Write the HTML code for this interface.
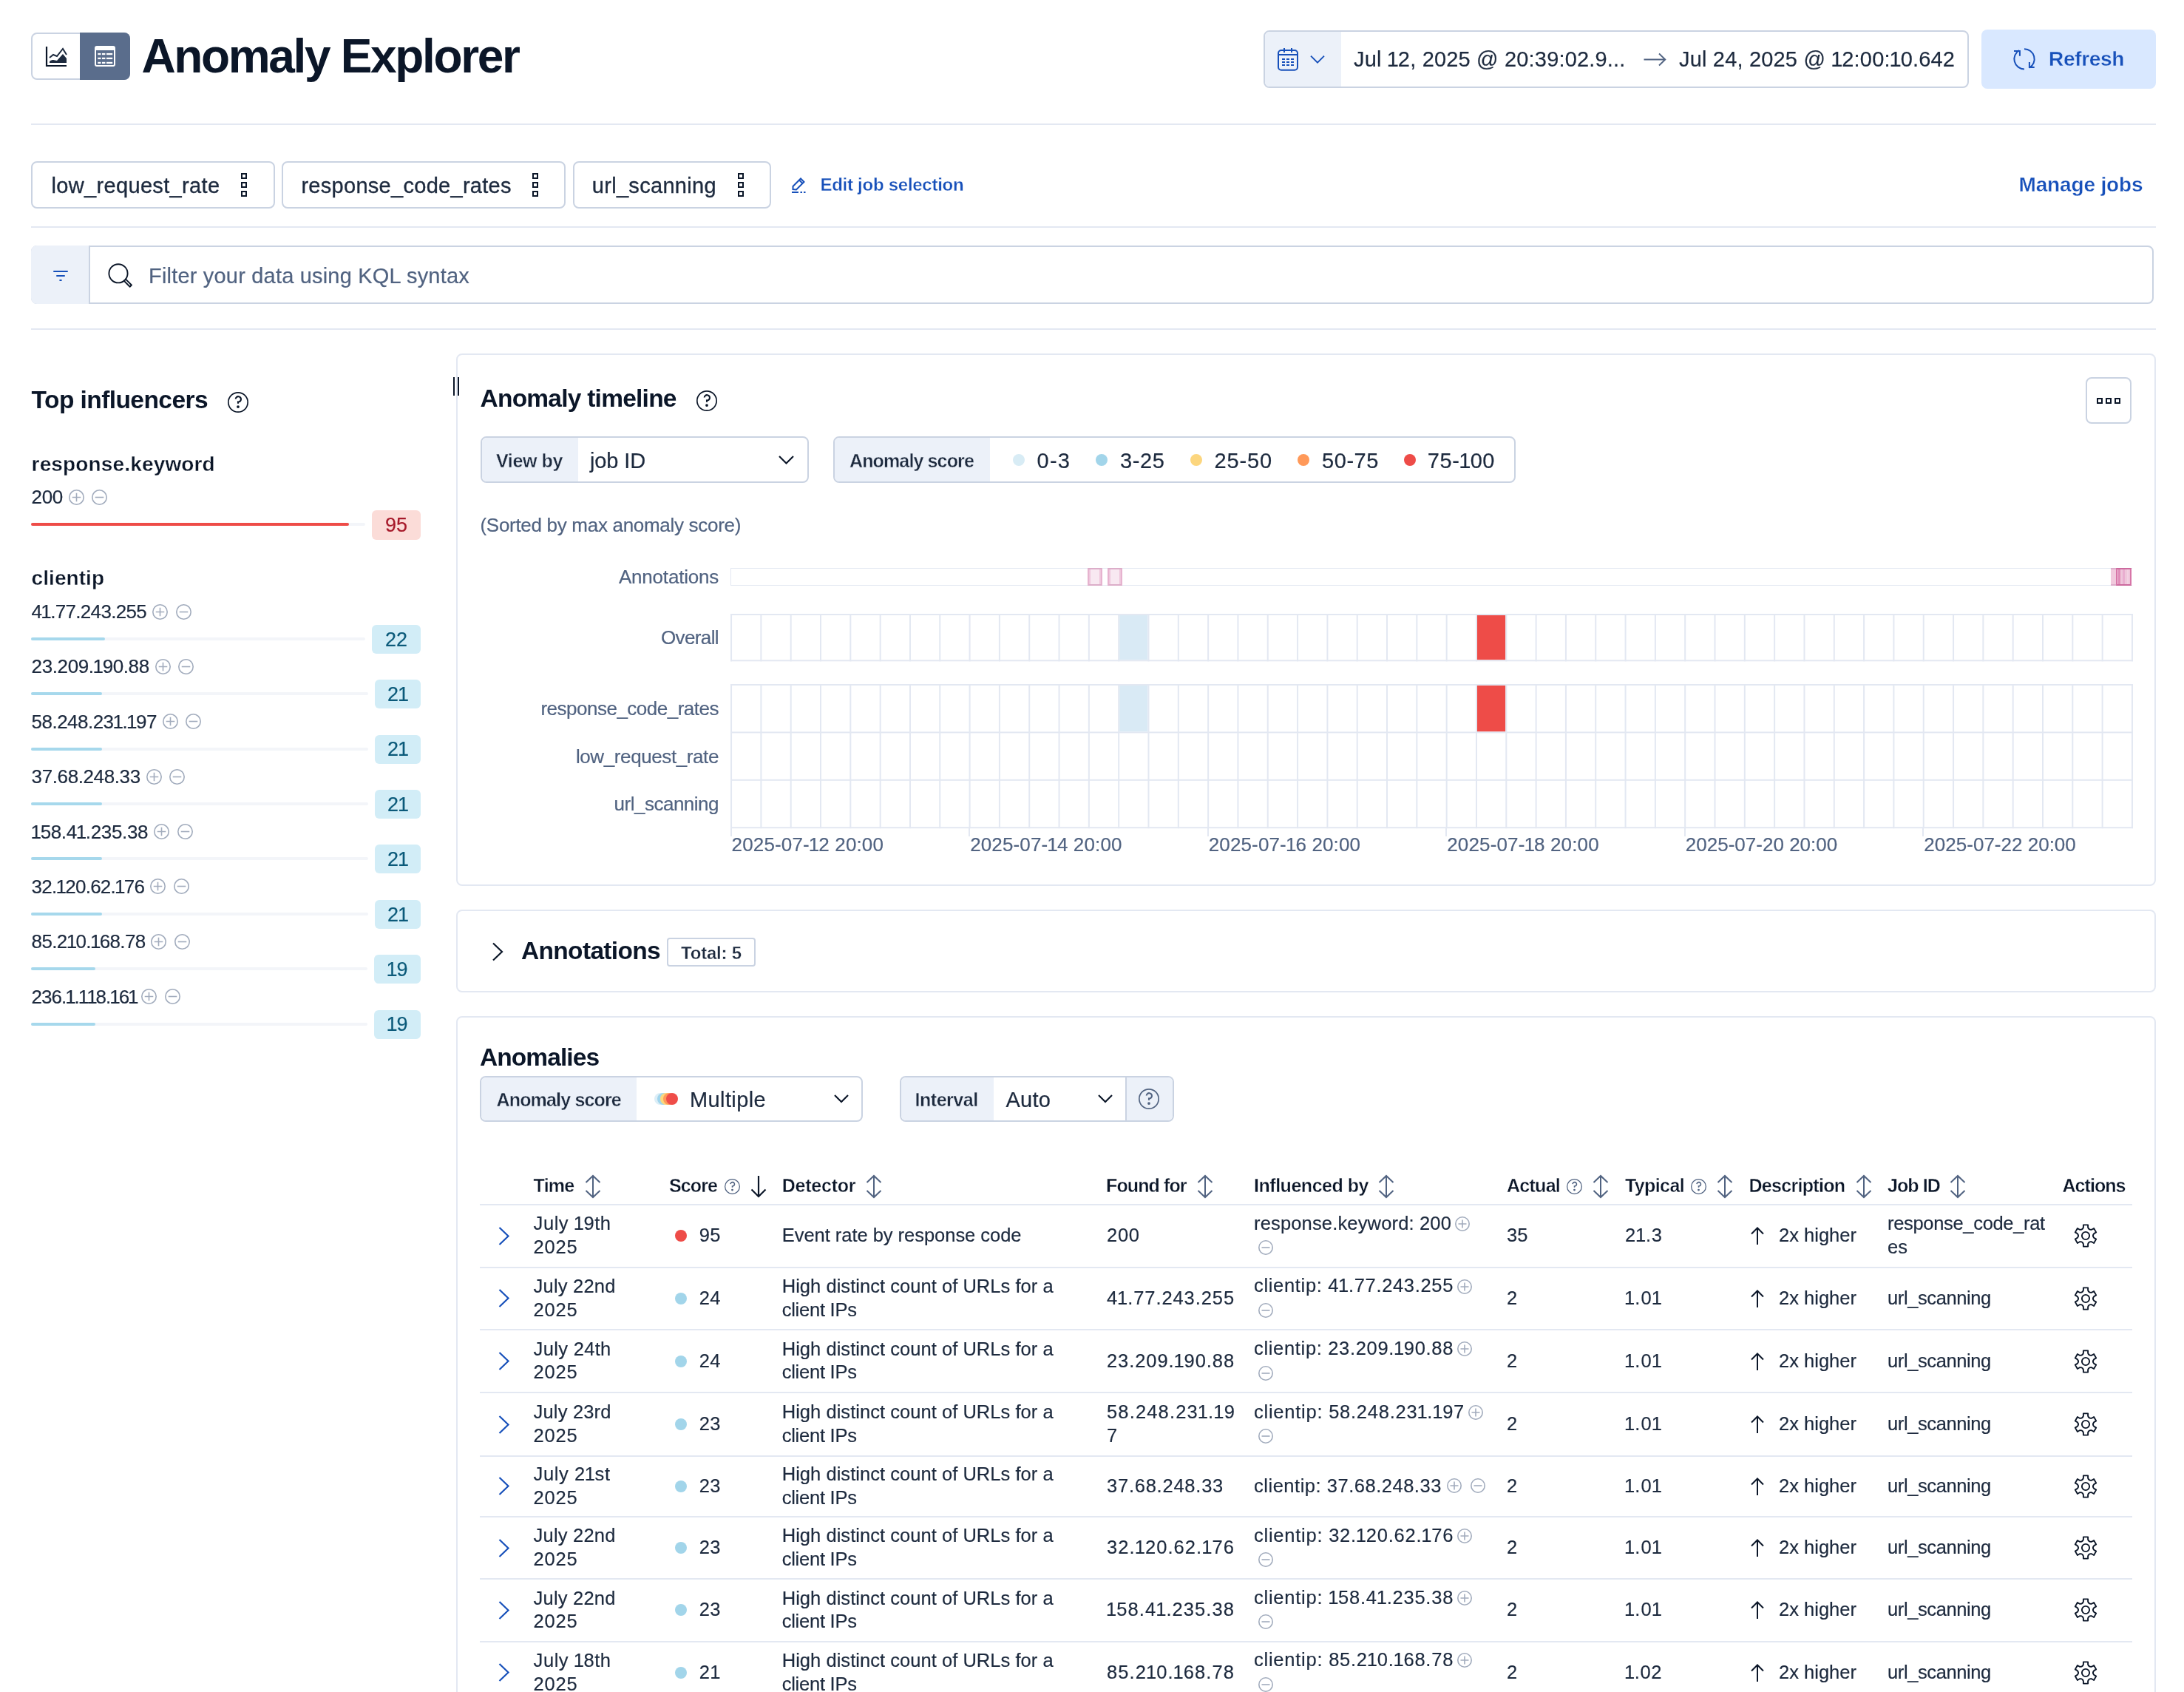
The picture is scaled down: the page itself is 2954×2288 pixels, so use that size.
<!DOCTYPE html><html><head><meta charset="utf-8"><style>
html,body{margin:0;padding:0;background:#fff;}
body{width:2954px;height:2288px;overflow:hidden;position:relative;will-change:transform;font-family:"Liberation Sans",sans-serif;}
.a{position:absolute;box-sizing:border-box;}
.t{position:absolute;line-height:1;white-space:nowrap;}
svg.a{overflow:visible;}
</style></head><body>
<div class="a" style="left:42px;top:44px;width:134px;height:64px;border:2px solid #cad3e2;border-radius:8px;background:#fff;"></div>
<div class="a" style="left:108px;top:44px;width:68px;height:64px;background:#5a6d8c;border-radius:0 8px 8px 0;"></div>
<svg class="a" style="left:62px;top:62px;" width="28" height="28" viewBox="0 0 28 28"><path d="M1 1V27H28" fill="none" stroke="#0b1628" stroke-width="2.2"/><path d="M5 16 L10 12 L15 14 L23 4 L28 12" fill="none" stroke="#1d2a3e" stroke-width="2"/><path d="M5 22 C5 20 8 19 10 19 L15 20 L23 11 L28 17 V23 H5Z" fill="#1d2a3e"/></svg>
<svg class="a" style="left:128px;top:62px;" width="28" height="28" viewBox="0 0 28 28"><rect x="1" y="1" width="26" height="26" rx="2" fill="none" stroke="#fff" stroke-width="2"/><rect x="1" y="1" width="26" height="5" rx="1.5" fill="#fff"/><g fill="#fff"><rect x="4.3" y="9.9" width="4.2" height="2.3"/><rect x="10" y="9.9" width="4.4" height="2.3"/><rect x="16" y="9.9" width="8.2" height="2.3"/><rect x="4.3" y="15.8" width="4.2" height="2.3"/><rect x="10" y="15.8" width="4.4" height="2.3"/><rect x="16" y="15.8" width="8.2" height="2.3"/><rect x="4.3" y="21.8" width="4.2" height="2.3"/><rect x="10" y="21.8" width="4.4" height="2.3"/><rect x="16" y="21.8" width="8.2" height="2.3"/></g></svg>
<div class="t" style="left:191.5px;top:43.8px;font-size:64px;color:#0b1628;font-weight:700;letter-spacing:-2.36px;">Anomaly Explorer</div>
<div class="a" style="left:1709px;top:41px;width:954px;height:78px;border:2px solid #cad3e2;border-radius:8px;background:#fff;"></div>
<div class="a" style="left:1711px;top:43px;width:103px;height:74px;background:#ecf1f9;border-radius:6px 0 0 6px;"></div>
<svg class="a" style="left:1728px;top:65px;" width="28" height="30" viewBox="0 0 28 30"><g fill="none" stroke="#1750ba" stroke-width="2"><rect x="1" y="3" width="26" height="26.8" rx="4"/><path d="M9 0V6M19 0V6M1 9H27"/></g><g fill="#1750ba"><rect x="6" y="14" width="4" height="2"/><rect x="12" y="14" width="4" height="2"/><rect x="18" y="14" width="4" height="2"/><rect x="6" y="18" width="4" height="2"/><rect x="12" y="18" width="4" height="2"/><rect x="18" y="18" width="4" height="2"/><rect x="6" y="22" width="4" height="2"/><rect x="12" y="22" width="4" height="2"/><rect x="18" y="22" width="4" height="2"/></g></svg>
<svg class="a" style="left:1772px;top:75px;" width="20" height="11" viewBox="0 0 20 11"><path d="M1 0.7L10 9.7L19 0.7" fill="none" stroke="#1750ba" stroke-width="1.9"/></svg>
<div class="t" style="left:1831px;top:65.5px;font-size:29px;color:#1d2a3e;-webkit-text-stroke:0.2px #1d2a3e;letter-spacing:0.18px;">Jul <span style="margin:0 -1.16px">1</span>2, 2025 @ 20:39:02.9...</div>
<svg class="a" style="left:2223px;top:71px;" width="31" height="19" viewBox="0 0 31 19"><path d="M0.5 9.5H29M21 1.5L29.3 9.5L21 17.5" fill="none" stroke="#516381" stroke-width="1.9"/></svg>
<div class="t" style="left:2271px;top:65.5px;font-size:29px;color:#1d2a3e;-webkit-text-stroke:0.2px #1d2a3e;letter-spacing:0.18px;">Jul 24, 2025 @ <span style="margin:0 -1.16px">1</span>2:00:<span style="margin:0 -1.16px">1</span>0.642</div>
<div class="a" style="left:2680px;top:40px;width:236px;height:80px;background:#d9e8ff;border-radius:8px;"></div>
<svg class="a" style="left:2723px;top:66px;" width="30" height="28" viewBox="0 0 30 28"><g fill="none" stroke="#1750ba" stroke-width="2"><path d="M8.2 2 A13.6 13.6 0 0 0 15 27.4"/><path d="M15 0.2 A13.6 13.6 0 0 1 21.8 25.6"/><path d="M1 2.9H8.9V9.7"/><path d="M21.9 18.1V24.9H28.7"/></g></svg>
<div class="t" style="left:2771px;top:66.3px;font-size:28px;color:#1750ba;font-weight:700;-webkit-text-stroke:0.35px #d9e8ff;letter-spacing:-0.33px;">Refresh</div>
<div class="a" style="left:42px;top:167px;width:2874px;height:2px;background:#e3e8f2;"></div>
<div class="a" style="left:42px;top:218px;width:330px;height:64px;border:2px solid #cad3e2;border-radius:8px;"></div>
<div class="t" style="left:69.4px;top:236.5px;font-size:29px;color:#1d2a3e;-webkit-text-stroke:0.35px #1d2a3e;letter-spacing:0.35px;">low_request_rate</div>
<svg class="a" style="left:326px;top:234px;" width="8" height="32" viewBox="0 0 8 32"><g fill="none" stroke="#0b1628" stroke-width="2"><rect x="1" y="1" width="6" height="6"/><rect x="1" y="13" width="6" height="6"/><rect x="1" y="25" width="6" height="6"/></g></svg>
<div class="a" style="left:381px;top:218px;width:384px;height:64px;border:2px solid #cad3e2;border-radius:8px;"></div>
<div class="t" style="left:407.4px;top:236.5px;font-size:29px;color:#1d2a3e;-webkit-text-stroke:0.35px #1d2a3e;letter-spacing:0.29px;">response_code_rates</div>
<svg class="a" style="left:720px;top:234px;" width="8" height="32" viewBox="0 0 8 32"><g fill="none" stroke="#0b1628" stroke-width="2"><rect x="1" y="1" width="6" height="6"/><rect x="1" y="13" width="6" height="6"/><rect x="1" y="25" width="6" height="6"/></g></svg>
<div class="a" style="left:775px;top:218px;width:268px;height:64px;border:2px solid #cad3e2;border-radius:8px;"></div>
<div class="t" style="left:800.8px;top:236.5px;font-size:29px;color:#1d2a3e;-webkit-text-stroke:0.35px #1d2a3e;letter-spacing:0.3px;">url_scanning</div>
<svg class="a" style="left:998px;top:234px;" width="8" height="32" viewBox="0 0 8 32"><g fill="none" stroke="#0b1628" stroke-width="2"><rect x="1" y="1" width="6" height="6"/><rect x="1" y="13" width="6" height="6"/><rect x="1" y="25" width="6" height="6"/></g></svg>
<svg class="a" style="left:1071px;top:239px;" width="19" height="22" viewBox="0 0 19 22"><g fill="none" stroke="#1750ba" stroke-width="2"><path d="M1.5 17V13L12 2.5L16.5 7L6 17.5Z M10 4.5L14.5 9"/></g><path d="M0 21H9M11.5 21H14M16 21H18.5" stroke="#1750ba" stroke-width="1.8"/></svg>
<div class="t" style="left:1109.4px;top:237.7px;font-size:24px;color:#1750ba;font-weight:700;-webkit-text-stroke:0.35px #fff;letter-spacing:-0.26px;">Edit job selection</div>
<div class="t" style="left:2730.5px;top:236.3px;font-size:28px;color:#1750ba;font-weight:700;-webkit-text-stroke:0.35px #fff;letter-spacing:-0.15px;">Manage jobs</div>
<div class="a" style="left:42px;top:306px;width:2874px;height:2px;background:#e3e8f2;"></div>
<div class="a" style="left:42px;top:332px;width:2871px;height:79px;border:2px solid #cad3e2;border-radius:8px;background:#fff;"></div>
<div class="a" style="left:42px;top:332px;width:79px;height:79px;background:#ecf1f9;border-radius:8px 0 0 8px;"></div>
<div class="a" style="left:120px;top:332px;width:2px;height:79px;background:#cad3e2;"></div>
<svg class="a" style="left:72px;top:365px;" width="20" height="16" viewBox="0 0 20 16"><path d="M1 2H19M5 8H15M9.2 14H10.8" stroke="#1750ba" stroke-width="2" stroke-linecap="round"/></svg>
<svg class="a" style="left:146px;top:356px;" width="34" height="34" viewBox="0 0 34 34"><g fill="none" stroke="#0b1628" stroke-width="1.9" stroke-linejoin="round"><circle cx="14" cy="13.8" r="12.6"/><path d="M21.07 23.13L29.67 31.73L31.93 29.47L23.33 20.87"/></g></svg>
<div class="t" style="left:201px;top:358.5px;font-size:29px;color:#516381;-webkit-text-stroke:0.2px #516381;letter-spacing:0.19px;">Filter your data using KQL syntax</div>
<div class="a" style="left:42px;top:444px;width:2874px;height:2px;background:#e3e8f2;"></div>
<div class="t" style="left:42.6px;top:523.6px;font-size:33.5px;color:#0b1628;font-weight:700;letter-spacing:-0.57px;">Top influencers</div>
<svg class="a" style="left:307.8px;top:530.0px;" width="28" height="28" viewBox="0 0 28 28"><circle cx="14.0" cy="14.0" r="13.16" fill="none" stroke="#0b1628" stroke-width="1.68"/><path d="M10.70 9.52 A3.64 3.64 0 1 1 14.00 13.44 V15.68" fill="none" stroke="#0b1628" stroke-width="2.10"/><circle cx="14.0" cy="20.08" r="1.90" fill="#0b1628"/></svg>
<div class="t" style="left:42.6px;top:614.3px;font-size:28px;color:#0b1628;font-weight:700;-webkit-text-stroke:0.35px #fff;letter-spacing:0.15px;">response.keyword</div>
<div class="t" style="left:42.6px;top:659.0px;font-size:26px;color:#1d2a3e;-webkit-text-stroke:0.2px #1d2a3e;letter-spacing:-0.32px;">200</div>
<svg class="a" style="left:92.5px;top:661.5px;" width="21" height="21" viewBox="0 0 21 21"><g fill="none" stroke="#a2acbd" stroke-width="1.6"><circle cx="10.5" cy="10.5" r="9.7"/><path d="M10.5 4.7250000000000005V16.275000000000002M4.7250000000000005 10.5H16.275000000000002"/></g></svg>
<svg class="a" style="left:124.0px;top:661.5px;" width="21" height="21" viewBox="0 0 21 21"><g fill="none" stroke="#a2acbd" stroke-width="1.6"><circle cx="10.5" cy="10.5" r="9.7"/><path d="M4.7250000000000005 10.5H16.275000000000002"/></g></svg>
<div class="a" style="left:42px;top:707px;width:452px;height:4px;background:#f3f5f9;border-radius:2px;"></div>
<div class="a" style="left:42px;top:707px;width:430px;height:4px;background:#ee4c48;border-radius:2px;"></div>
<div class="a" style="left:503px;top:690px;width:66px;height:40px;background:#fbdcd8;border-radius:6px;"></div>
<div class="t" style="left:536px;transform:translateX(-50%);top:697.1px;font-size:27px;color:#a6192a;-webkit-text-stroke:0.2px #a6192a;">95</div>
<div class="t" style="left:42.6px;top:768.3px;font-size:28px;color:#0b1628;font-weight:700;-webkit-text-stroke:0.35px #fff;letter-spacing:0.06px;">clientip</div>
<div class="t" style="left:42.6px;top:814.0px;font-size:26px;color:#1d2a3e;-webkit-text-stroke:0.2px #1d2a3e;letter-spacing:-0.67px;">4<span style="margin:0 -1.04px">1</span>.77.243.255</div>
<svg class="a" style="left:206.0px;top:816.5px;" width="21" height="21" viewBox="0 0 21 21"><g fill="none" stroke="#a2acbd" stroke-width="1.6"><circle cx="10.5" cy="10.5" r="9.7"/><path d="M10.5 4.7250000000000005V16.275000000000002M4.7250000000000005 10.5H16.275000000000002"/></g></svg>
<svg class="a" style="left:237.5px;top:816.5px;" width="21" height="21" viewBox="0 0 21 21"><g fill="none" stroke="#a2acbd" stroke-width="1.6"><circle cx="10.5" cy="10.5" r="9.7"/><path d="M4.7250000000000005 10.5H16.275000000000002"/></g></svg>
<div class="a" style="left:42px;top:862.0px;width:452px;height:4px;background:#f3f5f9;border-radius:2px;"></div>
<div class="a" style="left:42px;top:862.0px;width:100px;height:4px;background:#a6d8ec;border-radius:2px;"></div>
<div class="a" style="left:503px;top:845.0px;width:66px;height:39px;background:#d2edf7;border-radius:6px;"></div>
<div class="t" style="left:536.0px;transform:translateX(-50%);top:851.6px;font-size:27px;color:#0b5a7a;-webkit-text-stroke:0.2px #0b5a7a;">22</div>
<div class="t" style="left:42.6px;top:888.4px;font-size:26px;color:#1d2a3e;-webkit-text-stroke:0.2px #1d2a3e;letter-spacing:-0.39px;">23.209.<span style="margin:0 -1.04px">1</span>90.88</div>
<svg class="a" style="left:209.6px;top:890.87px;" width="21" height="21" viewBox="0 0 21 21"><g fill="none" stroke="#a2acbd" stroke-width="1.6"><circle cx="10.5" cy="10.5" r="9.7"/><path d="M10.5 4.7250000000000005V16.275000000000002M4.7250000000000005 10.5H16.275000000000002"/></g></svg>
<svg class="a" style="left:241.1px;top:890.87px;" width="21" height="21" viewBox="0 0 21 21"><g fill="none" stroke="#a2acbd" stroke-width="1.6"><circle cx="10.5" cy="10.5" r="9.7"/><path d="M4.7250000000000005 10.5H16.275000000000002"/></g></svg>
<div class="a" style="left:42px;top:936.37px;width:456px;height:4px;background:#f3f5f9;border-radius:2px;"></div>
<div class="a" style="left:42px;top:936.37px;width:96px;height:4px;background:#a6d8ec;border-radius:2px;"></div>
<div class="a" style="left:507px;top:919.37px;width:62px;height:39px;background:#d2edf7;border-radius:6px;"></div>
<div class="t" style="left:538.0px;transform:translateX(-50%);top:926.0px;font-size:27px;color:#0b5a7a;-webkit-text-stroke:0.2px #0b5a7a;">2<span style="margin:0 -1.08px">1</span></div>
<div class="t" style="left:42.6px;top:962.7px;font-size:26px;color:#1d2a3e;-webkit-text-stroke:0.2px #1d2a3e;letter-spacing:-0.53px;">58.248.23<span style="margin:0 -1.04px">1</span>.<span style="margin:0 -1.04px">1</span>97</div>
<svg class="a" style="left:219.6px;top:965.24px;" width="21" height="21" viewBox="0 0 21 21"><g fill="none" stroke="#a2acbd" stroke-width="1.6"><circle cx="10.5" cy="10.5" r="9.7"/><path d="M10.5 4.7250000000000005V16.275000000000002M4.7250000000000005 10.5H16.275000000000002"/></g></svg>
<svg class="a" style="left:251.10000000000002px;top:965.24px;" width="21" height="21" viewBox="0 0 21 21"><g fill="none" stroke="#a2acbd" stroke-width="1.6"><circle cx="10.5" cy="10.5" r="9.7"/><path d="M4.7250000000000005 10.5H16.275000000000002"/></g></svg>
<div class="a" style="left:42px;top:1010.74px;width:456px;height:4px;background:#f3f5f9;border-radius:2px;"></div>
<div class="a" style="left:42px;top:1010.74px;width:96px;height:4px;background:#a6d8ec;border-radius:2px;"></div>
<div class="a" style="left:507px;top:993.74px;width:62px;height:39px;background:#d2edf7;border-radius:6px;"></div>
<div class="t" style="left:538.0px;transform:translateX(-50%);top:1000.4px;font-size:27px;color:#0b5a7a;-webkit-text-stroke:0.2px #0b5a7a;">2<span style="margin:0 -1.08px">1</span></div>
<div class="t" style="left:42.6px;top:1037.1px;font-size:26px;color:#1d2a3e;-webkit-text-stroke:0.2px #1d2a3e;letter-spacing:-0.39px;">37.68.248.33</div>
<svg class="a" style="left:197.6px;top:1039.6100000000001px;" width="21" height="21" viewBox="0 0 21 21"><g fill="none" stroke="#a2acbd" stroke-width="1.6"><circle cx="10.5" cy="10.5" r="9.7"/><path d="M10.5 4.7250000000000005V16.275000000000002M4.7250000000000005 10.5H16.275000000000002"/></g></svg>
<svg class="a" style="left:229.1px;top:1039.6100000000001px;" width="21" height="21" viewBox="0 0 21 21"><g fill="none" stroke="#a2acbd" stroke-width="1.6"><circle cx="10.5" cy="10.5" r="9.7"/><path d="M4.7250000000000005 10.5H16.275000000000002"/></g></svg>
<div class="a" style="left:42px;top:1085.1100000000001px;width:456px;height:4px;background:#f3f5f9;border-radius:2px;"></div>
<div class="a" style="left:42px;top:1085.1100000000001px;width:96px;height:4px;background:#a6d8ec;border-radius:2px;"></div>
<div class="a" style="left:507px;top:1068.1100000000001px;width:62px;height:39px;background:#d2edf7;border-radius:6px;"></div>
<div class="t" style="left:538.0px;transform:translateX(-50%);top:1074.8px;font-size:27px;color:#0b5a7a;-webkit-text-stroke:0.2px #0b5a7a;">2<span style="margin:0 -1.08px">1</span></div>
<div class="t" style="left:42.6px;top:1111.5px;font-size:26px;color:#1d2a3e;-webkit-text-stroke:0.2px #1d2a3e;letter-spacing:-0.36px;"><span style="margin:0 -1.04px">1</span>58.4<span style="margin:0 -1.04px">1</span>.235.38</div>
<svg class="a" style="left:208.0px;top:1113.98px;" width="21" height="21" viewBox="0 0 21 21"><g fill="none" stroke="#a2acbd" stroke-width="1.6"><circle cx="10.5" cy="10.5" r="9.7"/><path d="M10.5 4.7250000000000005V16.275000000000002M4.7250000000000005 10.5H16.275000000000002"/></g></svg>
<svg class="a" style="left:239.5px;top:1113.98px;" width="21" height="21" viewBox="0 0 21 21"><g fill="none" stroke="#a2acbd" stroke-width="1.6"><circle cx="10.5" cy="10.5" r="9.7"/><path d="M4.7250000000000005 10.5H16.275000000000002"/></g></svg>
<div class="a" style="left:42px;top:1159.48px;width:456px;height:4px;background:#f3f5f9;border-radius:2px;"></div>
<div class="a" style="left:42px;top:1159.48px;width:96px;height:4px;background:#a6d8ec;border-radius:2px;"></div>
<div class="a" style="left:507px;top:1142.48px;width:62px;height:39px;background:#d2edf7;border-radius:6px;"></div>
<div class="t" style="left:538.0px;transform:translateX(-50%);top:1149.1px;font-size:27px;color:#0b5a7a;-webkit-text-stroke:0.2px #0b5a7a;">2<span style="margin:0 -1.08px">1</span></div>
<div class="t" style="left:42.6px;top:1185.8px;font-size:26px;color:#1d2a3e;-webkit-text-stroke:0.2px #1d2a3e;letter-spacing:-0.74px;">32.<span style="margin:0 -1.04px">1</span>20.62.<span style="margin:0 -1.04px">1</span>76</div>
<svg class="a" style="left:203.0px;top:1188.35px;" width="21" height="21" viewBox="0 0 21 21"><g fill="none" stroke="#a2acbd" stroke-width="1.6"><circle cx="10.5" cy="10.5" r="9.7"/><path d="M10.5 4.7250000000000005V16.275000000000002M4.7250000000000005 10.5H16.275000000000002"/></g></svg>
<svg class="a" style="left:234.5px;top:1188.35px;" width="21" height="21" viewBox="0 0 21 21"><g fill="none" stroke="#a2acbd" stroke-width="1.6"><circle cx="10.5" cy="10.5" r="9.7"/><path d="M4.7250000000000005 10.5H16.275000000000002"/></g></svg>
<div class="a" style="left:42px;top:1233.85px;width:456px;height:4px;background:#f3f5f9;border-radius:2px;"></div>
<div class="a" style="left:42px;top:1233.85px;width:96px;height:4px;background:#a6d8ec;border-radius:2px;"></div>
<div class="a" style="left:507px;top:1216.85px;width:62px;height:39px;background:#d2edf7;border-radius:6px;"></div>
<div class="t" style="left:538.0px;transform:translateX(-50%);top:1223.5px;font-size:27px;color:#0b5a7a;-webkit-text-stroke:0.2px #0b5a7a;">2<span style="margin:0 -1.08px">1</span></div>
<div class="t" style="left:42.6px;top:1260.2px;font-size:26px;color:#1d2a3e;-webkit-text-stroke:0.2px #1d2a3e;letter-spacing:-0.63px;">85.2<span style="margin:0 -1.04px">1</span>0.<span style="margin:0 -1.04px">1</span>68.78</div>
<svg class="a" style="left:204.4px;top:1262.72px;" width="21" height="21" viewBox="0 0 21 21"><g fill="none" stroke="#a2acbd" stroke-width="1.6"><circle cx="10.5" cy="10.5" r="9.7"/><path d="M10.5 4.7250000000000005V16.275000000000002M4.7250000000000005 10.5H16.275000000000002"/></g></svg>
<svg class="a" style="left:235.9px;top:1262.72px;" width="21" height="21" viewBox="0 0 21 21"><g fill="none" stroke="#a2acbd" stroke-width="1.6"><circle cx="10.5" cy="10.5" r="9.7"/><path d="M4.7250000000000005 10.5H16.275000000000002"/></g></svg>
<div class="a" style="left:42px;top:1308.22px;width:455px;height:4px;background:#f3f5f9;border-radius:2px;"></div>
<div class="a" style="left:42px;top:1308.22px;width:87px;height:4px;background:#a6d8ec;border-radius:2px;"></div>
<div class="a" style="left:506px;top:1291.22px;width:63px;height:39px;background:#d2edf7;border-radius:6px;"></div>
<div class="t" style="left:537.5px;transform:translateX(-50%);top:1297.9px;font-size:27px;color:#0b5a7a;-webkit-text-stroke:0.2px #0b5a7a;"><span style="margin:0 -1.08px">1</span>9</div>
<div class="t" style="left:42.6px;top:1334.6px;font-size:26px;color:#1d2a3e;-webkit-text-stroke:0.2px #1d2a3e;letter-spacing:-1.01px;">236.<span style="margin:0 -1.04px">1</span>.<span style="margin:0 -1.04px">1</span><span style="margin:0 -1.04px">1</span>8.<span style="margin:0 -1.04px">1</span>6<span style="margin:0 -1.04px">1</span></div>
<svg class="a" style="left:191.29999999999998px;top:1337.0900000000001px;" width="21" height="21" viewBox="0 0 21 21"><g fill="none" stroke="#a2acbd" stroke-width="1.6"><circle cx="10.5" cy="10.5" r="9.7"/><path d="M10.5 4.7250000000000005V16.275000000000002M4.7250000000000005 10.5H16.275000000000002"/></g></svg>
<svg class="a" style="left:222.79999999999998px;top:1337.0900000000001px;" width="21" height="21" viewBox="0 0 21 21"><g fill="none" stroke="#a2acbd" stroke-width="1.6"><circle cx="10.5" cy="10.5" r="9.7"/><path d="M4.7250000000000005 10.5H16.275000000000002"/></g></svg>
<div class="a" style="left:42px;top:1382.5900000000001px;width:455px;height:4px;background:#f3f5f9;border-radius:2px;"></div>
<div class="a" style="left:42px;top:1382.5900000000001px;width:87px;height:4px;background:#a6d8ec;border-radius:2px;"></div>
<div class="a" style="left:506px;top:1365.5900000000001px;width:63px;height:39px;background:#d2edf7;border-radius:6px;"></div>
<div class="t" style="left:537.5px;transform:translateX(-50%);top:1372.2px;font-size:27px;color:#0b5a7a;-webkit-text-stroke:0.2px #0b5a7a;"><span style="margin:0 -1.08px">1</span>9</div>
<div class="a" style="left:617px;top:478px;width:2299px;height:720px;border:2px solid #e3e8f2;border-radius:8px;background:#fff;"></div>
<svg class="a" style="left:612px;top:510px;" width="10" height="25" viewBox="0 0 10 25"><path d="M2 0V25M8 0V25" stroke="#0b1628" stroke-width="2"/></svg>
<div class="t" style="left:649.5px;top:521.6px;font-size:33.5px;color:#0b1628;font-weight:700;letter-spacing:-0.76px;">Anomaly timeline</div>
<svg class="a" style="left:942.0px;top:527.5px;" width="28" height="28" viewBox="0 0 28 28"><circle cx="14.0" cy="14.0" r="13.16" fill="none" stroke="#0b1628" stroke-width="1.68"/><path d="M10.70 9.52 A3.64 3.64 0 1 1 14.00 13.44 V15.68" fill="none" stroke="#0b1628" stroke-width="2.10"/><circle cx="14.0" cy="20.08" r="1.90" fill="#0b1628"/></svg>
<div class="a" style="left:2821px;top:510px;width:62px;height:63px;border:2px solid #cad3e2;border-radius:8px;"></div>
<svg class="a" style="left:2836px;top:538px;" width="32" height="8" viewBox="0 0 32 8"><g fill="none" stroke="#0b1628" stroke-width="2"><rect x="1" y="1" width="6" height="6"/><rect x="13" y="1" width="6" height="6"/><rect x="25" y="1" width="6" height="6"/></g></svg>
<div class="a" style="left:649.5px;top:590px;width:444px;height:63px;border:2px solid #cad3e2;border-radius:8px;background:#fff;"></div>
<div class="a" style="left:651.5px;top:592px;width:130px;height:59px;background:#ecf1f9;border-radius:6px 0 0 6px;"></div>
<div class="t" style="left:671px;top:610.8px;font-size:25px;color:#1d2a3e;font-weight:700;-webkit-text-stroke:0.35px #ecf1f9;letter-spacing:-0.38px;">View by</div>
<div class="t" style="left:798px;top:608.5px;font-size:29px;color:#1d2a3e;-webkit-text-stroke:0.2px #1d2a3e;letter-spacing:-0.12px;">job ID</div>
<svg class="a" style="left:1053px;top:616px;" width="21" height="12" viewBox="0 0 21 12"><path d="M1 1L10.5 10.5L20 1" fill="none" stroke="#0b1628" stroke-width="2.2"/></svg>
<div class="a" style="left:1126.6px;top:590px;width:923px;height:63px;border:2px solid #cad3e2;border-radius:8px;background:#fff;"></div>
<div class="a" style="left:1128.6px;top:592px;width:210px;height:59px;background:#ecf1f9;border-radius:6px 0 0 6px;"></div>
<div class="t" style="left:1149px;top:610.8px;font-size:25px;color:#1d2a3e;font-weight:700;-webkit-text-stroke:0.35px #ecf1f9;letter-spacing:-0.87px;">Anomaly score</div>
<div class="a" style="left:1369.7px;top:614px;width:16px;height:16px;background:#d8ecf5;border-radius:50%;"></div>
<div class="t" style="left:1402.6px;top:608.5px;font-size:29px;color:#1d2a3e;-webkit-text-stroke:0.2px #1d2a3e;letter-spacing:1.16px;">0-3</div>
<div class="a" style="left:1481.7px;top:614px;width:16px;height:16px;background:#a2d5ea;border-radius:50%;"></div>
<div class="t" style="left:1515px;top:608.5px;font-size:29px;color:#1d2a3e;-webkit-text-stroke:0.2px #1d2a3e;letter-spacing:0.62px;">3-25</div>
<div class="a" style="left:1609.6px;top:614px;width:16px;height:16px;background:#fcd67e;border-radius:50%;"></div>
<div class="t" style="left:1642.5px;top:608.5px;font-size:29px;color:#1d2a3e;-webkit-text-stroke:0.2px #1d2a3e;letter-spacing:0.87px;">25-50</div>
<div class="a" style="left:1754.6px;top:614px;width:16px;height:16px;background:#ff9959;border-radius:50%;"></div>
<div class="t" style="left:1788px;top:608.5px;font-size:29px;color:#1d2a3e;-webkit-text-stroke:0.2px #1d2a3e;letter-spacing:0.57px;">50-75</div>
<div class="a" style="left:1898.6px;top:614px;width:16px;height:16px;background:#ee4c48;border-radius:50%;"></div>
<div class="t" style="left:1930.8px;top:608.5px;font-size:29px;color:#1d2a3e;-webkit-text-stroke:0.2px #1d2a3e;letter-spacing:0.54px;">75-<span style="margin:0 -1.16px">1</span>00</div>
<div class="t" style="left:649.5px;top:697.0px;font-size:26px;color:#516381;-webkit-text-stroke:0.2px #516381;letter-spacing:-0.3px;">(Sorted by max anomaly score)</div>
<div class="t" style="right:1982px;top:766.5px;font-size:26px;color:#516381;-webkit-text-stroke:0.2px #516381;letter-spacing:-0.21px;">Annotations</div>
<div class="t" style="right:1982px;top:848.5px;font-size:26px;color:#516381;-webkit-text-stroke:0.2px #516381;letter-spacing:-0.62px;">Overall</div>
<div class="t" style="right:1982px;top:944.5px;font-size:26px;color:#516381;-webkit-text-stroke:0.2px #516381;letter-spacing:-0.5px;">response_code_rates</div>
<div class="t" style="right:1982px;top:1010.0px;font-size:26px;color:#516381;-webkit-text-stroke:0.2px #516381;letter-spacing:-0.4px;">low_request_rate</div>
<div class="t" style="right:1982px;top:1073.9px;font-size:26px;color:#516381;-webkit-text-stroke:0.2px #516381;letter-spacing:-0.5px;">url_scanning</div>
<div class="a" style="left:988px;top:768px;width:1896px;height:24px;border:1.5px solid #e3e8f2;border-right:none;"></div>
<div class="a" style="left:1471px;top:768px;width:20px;height:24px;background:#f8e8f1;border:2px solid #e6b3cf;border-top-color:#dcadc9;border-bottom-color:#dcadc9;"></div>
<div class="a" style="left:1473px;top:770px;width:2px;height:20px;background:#eec6dc;"></div>
<div class="a" style="left:1487px;top:770px;width:2px;height:20px;background:#eec6dc;"></div>
<div class="a" style="left:1498px;top:768px;width:20px;height:24px;background:#f8e8f1;border:2px solid #e6b3cf;border-top-color:#dcadc9;border-bottom-color:#dcadc9;"></div>
<div class="a" style="left:1500px;top:770px;width:2px;height:20px;background:#eec6dc;"></div>
<div class="a" style="left:1514px;top:770px;width:2px;height:20px;background:#eec6dc;"></div>
<div class="a" style="left:2855px;top:768px;width:8px;height:24px;background:#f1c9dd;border-top:2px solid #dcaecb;border-bottom:2px solid #dcaecb;"></div>
<div class="a" style="left:2862px;top:768px;width:21px;height:24px;background:#efc6db;border:2px solid #d776a8;border-top-color:#cc6a9e;border-bottom-color:#cc6a9e;"></div>
<div class="a" style="left:2865px;top:770px;width:3px;height:20px;background:#e08cb8;"></div>
<div class="a" style="left:2871px;top:770px;width:3px;height:20px;background:#e9aed0;"></div>
<div class="a" style="left:2877px;top:770px;width:2px;height:20px;background:#f3d2e3;"></div>
<svg class="a" style="left:988.6px;top:830.7px;" width="1895.0" height="62.3" viewBox="0 0 1895.0 62.3"><rect x="525.15" y="1.00" width="38.32" height="60.30" fill="#d9eaf5"/><rect x="1008.98" y="1.00" width="38.32" height="60.30" fill="#ee4c48"/><g fill="#e3e8f2"><rect x="-1.00" y="-1" width="2" height="64.3"/><rect x="39.32" y="-1" width="2" height="64.3"/><rect x="79.64" y="-1" width="2" height="64.3"/><rect x="119.96" y="-1" width="2" height="64.3"/><rect x="160.28" y="-1" width="2" height="64.3"/><rect x="200.60" y="-1" width="2" height="64.3"/><rect x="240.91" y="-1" width="2" height="64.3"/><rect x="281.23" y="-1" width="2" height="64.3"/><rect x="321.55" y="-1" width="2" height="64.3"/><rect x="361.87" y="-1" width="2" height="64.3"/><rect x="402.19" y="-1" width="2" height="64.3"/><rect x="442.51" y="-1" width="2" height="64.3"/><rect x="482.83" y="-1" width="2" height="64.3"/><rect x="523.15" y="-1" width="2" height="64.3"/><rect x="563.47" y="-1" width="2" height="64.3"/><rect x="603.79" y="-1" width="2" height="64.3"/><rect x="644.11" y="-1" width="2" height="64.3"/><rect x="684.43" y="-1" width="2" height="64.3"/><rect x="724.74" y="-1" width="2" height="64.3"/><rect x="765.06" y="-1" width="2" height="64.3"/><rect x="805.38" y="-1" width="2" height="64.3"/><rect x="845.70" y="-1" width="2" height="64.3"/><rect x="886.02" y="-1" width="2" height="64.3"/><rect x="926.34" y="-1" width="2" height="64.3"/><rect x="966.66" y="-1" width="2" height="64.3"/><rect x="1006.98" y="-1" width="2" height="64.3"/><rect x="1047.30" y="-1" width="2" height="64.3"/><rect x="1087.62" y="-1" width="2" height="64.3"/><rect x="1127.94" y="-1" width="2" height="64.3"/><rect x="1168.26" y="-1" width="2" height="64.3"/><rect x="1208.57" y="-1" width="2" height="64.3"/><rect x="1248.89" y="-1" width="2" height="64.3"/><rect x="1289.21" y="-1" width="2" height="64.3"/><rect x="1329.53" y="-1" width="2" height="64.3"/><rect x="1369.85" y="-1" width="2" height="64.3"/><rect x="1410.17" y="-1" width="2" height="64.3"/><rect x="1450.49" y="-1" width="2" height="64.3"/><rect x="1490.81" y="-1" width="2" height="64.3"/><rect x="1531.13" y="-1" width="2" height="64.3"/><rect x="1571.45" y="-1" width="2" height="64.3"/><rect x="1611.77" y="-1" width="2" height="64.3"/><rect x="1652.09" y="-1" width="2" height="64.3"/><rect x="1692.40" y="-1" width="2" height="64.3"/><rect x="1732.72" y="-1" width="2" height="64.3"/><rect x="1773.04" y="-1" width="2" height="64.3"/><rect x="1813.36" y="-1" width="2" height="64.3"/><rect x="1853.68" y="-1" width="2" height="64.3"/><rect x="1894.00" y="-1" width="2" height="64.3"/><rect x="-1" y="-1.00" width="1897.00" height="2"/><rect x="-1" y="61.30" width="1897.00" height="2"/></g></svg>
<svg class="a" style="left:988.6px;top:926.4px;" width="1895.0" height="193.20000000000002" viewBox="0 0 1895.0 193.20000000000002"><rect x="525.15" y="1.00" width="38.32" height="62.40" fill="#d9eaf5"/><rect x="1008.98" y="1.00" width="38.32" height="62.40" fill="#ee4c48"/><g fill="#e3e8f2"><rect x="-1.00" y="-1" width="2" height="195.20000000000002"/><rect x="39.32" y="-1" width="2" height="195.20000000000002"/><rect x="79.64" y="-1" width="2" height="195.20000000000002"/><rect x="119.96" y="-1" width="2" height="195.20000000000002"/><rect x="160.28" y="-1" width="2" height="195.20000000000002"/><rect x="200.60" y="-1" width="2" height="195.20000000000002"/><rect x="240.91" y="-1" width="2" height="195.20000000000002"/><rect x="281.23" y="-1" width="2" height="195.20000000000002"/><rect x="321.55" y="-1" width="2" height="195.20000000000002"/><rect x="361.87" y="-1" width="2" height="195.20000000000002"/><rect x="402.19" y="-1" width="2" height="195.20000000000002"/><rect x="442.51" y="-1" width="2" height="195.20000000000002"/><rect x="482.83" y="-1" width="2" height="195.20000000000002"/><rect x="523.15" y="-1" width="2" height="195.20000000000002"/><rect x="563.47" y="-1" width="2" height="195.20000000000002"/><rect x="603.79" y="-1" width="2" height="195.20000000000002"/><rect x="644.11" y="-1" width="2" height="195.20000000000002"/><rect x="684.43" y="-1" width="2" height="195.20000000000002"/><rect x="724.74" y="-1" width="2" height="195.20000000000002"/><rect x="765.06" y="-1" width="2" height="195.20000000000002"/><rect x="805.38" y="-1" width="2" height="195.20000000000002"/><rect x="845.70" y="-1" width="2" height="195.20000000000002"/><rect x="886.02" y="-1" width="2" height="195.20000000000002"/><rect x="926.34" y="-1" width="2" height="195.20000000000002"/><rect x="966.66" y="-1" width="2" height="195.20000000000002"/><rect x="1006.98" y="-1" width="2" height="195.20000000000002"/><rect x="1047.30" y="-1" width="2" height="195.20000000000002"/><rect x="1087.62" y="-1" width="2" height="195.20000000000002"/><rect x="1127.94" y="-1" width="2" height="195.20000000000002"/><rect x="1168.26" y="-1" width="2" height="195.20000000000002"/><rect x="1208.57" y="-1" width="2" height="195.20000000000002"/><rect x="1248.89" y="-1" width="2" height="195.20000000000002"/><rect x="1289.21" y="-1" width="2" height="195.20000000000002"/><rect x="1329.53" y="-1" width="2" height="195.20000000000002"/><rect x="1369.85" y="-1" width="2" height="195.20000000000002"/><rect x="1410.17" y="-1" width="2" height="195.20000000000002"/><rect x="1450.49" y="-1" width="2" height="195.20000000000002"/><rect x="1490.81" y="-1" width="2" height="195.20000000000002"/><rect x="1531.13" y="-1" width="2" height="195.20000000000002"/><rect x="1571.45" y="-1" width="2" height="195.20000000000002"/><rect x="1611.77" y="-1" width="2" height="195.20000000000002"/><rect x="1652.09" y="-1" width="2" height="195.20000000000002"/><rect x="1692.40" y="-1" width="2" height="195.20000000000002"/><rect x="1732.72" y="-1" width="2" height="195.20000000000002"/><rect x="1773.04" y="-1" width="2" height="195.20000000000002"/><rect x="1813.36" y="-1" width="2" height="195.20000000000002"/><rect x="1853.68" y="-1" width="2" height="195.20000000000002"/><rect x="1894.00" y="-1" width="2" height="195.20000000000002"/><rect x="-1" y="-1.00" width="1897.00" height="2"/><rect x="-1" y="63.40" width="1897.00" height="2"/><rect x="-1" y="127.80" width="1897.00" height="2"/><rect x="-1" y="192.20" width="1897.00" height="2"/></g></svg>
<div class="a" style="left:987.6px;top:1119px;width:2px;height:12px;background:#e3e8f2;"></div>
<div class="t" style="left:989.6px;top:1129.0px;font-size:26px;color:#516381;-webkit-text-stroke:0.2px #516381;letter-spacing:0.14px;">2025-07-<span style="margin:0 -1.04px">1</span>2 20:00</div>
<div class="a" style="left:1310.1531914893617px;top:1119px;width:2px;height:12px;background:#e3e8f2;"></div>
<div class="t" style="left:1312.1531914893617px;top:1129.0px;font-size:26px;color:#516381;-webkit-text-stroke:0.2px #516381;letter-spacing:0.14px;">2025-07-<span style="margin:0 -1.04px">1</span>4 20:00</div>
<div class="a" style="left:1632.7063829787235px;top:1119px;width:2px;height:12px;background:#e3e8f2;"></div>
<div class="t" style="left:1634.7063829787235px;top:1129.0px;font-size:26px;color:#516381;-webkit-text-stroke:0.2px #516381;letter-spacing:0.14px;">2025-07-<span style="margin:0 -1.04px">1</span>6 20:00</div>
<div class="a" style="left:1955.2595744680852px;top:1119px;width:2px;height:12px;background:#e3e8f2;"></div>
<div class="t" style="left:1957.2595744680852px;top:1129.0px;font-size:26px;color:#516381;-webkit-text-stroke:0.2px #516381;letter-spacing:0.14px;">2025-07-<span style="margin:0 -1.04px">1</span>8 20:00</div>
<div class="a" style="left:2277.812765957447px;top:1119px;width:2px;height:12px;background:#e3e8f2;"></div>
<div class="t" style="left:2279.812765957447px;top:1129.0px;font-size:26px;color:#516381;-webkit-text-stroke:0.2px #516381;letter-spacing:0.01px;">2025-07-20 20:00</div>
<div class="a" style="left:2600.365957446809px;top:1119px;width:2px;height:12px;background:#e3e8f2;"></div>
<div class="t" style="left:2602.365957446809px;top:1129.0px;font-size:26px;color:#516381;-webkit-text-stroke:0.2px #516381;letter-spacing:0.01px;">2025-07-22 20:00</div>
<div class="a" style="left:617px;top:1230px;width:2299px;height:112px;border:2px solid #e3e8f2;border-radius:8px;background:#fff;"></div>
<svg class="a" style="left:665px;top:1274px;" width="16" height="26" viewBox="0 0 16 26"><path d="M2 1.5L14 13L2 24.5" fill="none" stroke="#0b1628" stroke-width="2.2"/></svg>
<div class="t" style="left:705px;top:1269.1px;font-size:33.5px;color:#0b1628;font-weight:700;letter-spacing:-0.67px;">Annotations</div>
<div class="a" style="left:902px;top:1268px;width:120px;height:39px;border:2px solid #cad3e2;border-radius:4px;"></div>
<div class="t" style="left:962px;transform:translateX(-50%);top:1276.7px;font-size:24px;color:#1d2a3e;font-weight:700;-webkit-text-stroke:0.35px #fff;letter-spacing:-0.2px;">Total: 5</div>
<div class="a" style="left:617px;top:1374px;width:2299px;height:1000px;border:2px solid #e3e8f2;border-radius:8px;background:#fff;"></div>
<div class="t" style="left:649px;top:1412.6px;font-size:33.5px;color:#0b1628;font-weight:700;letter-spacing:-0.92px;">Anomalies</div>
<div class="a" style="left:649px;top:1455px;width:518px;height:62px;border:2px solid #cad3e2;border-radius:8px;background:#fff;"></div>
<div class="a" style="left:651px;top:1457px;width:210px;height:58px;background:#ecf1f9;border-radius:6px 0 0 6px;"></div>
<div class="t" style="left:671.5px;top:1474.8px;font-size:25px;color:#1d2a3e;font-weight:700;-webkit-text-stroke:0.35px #ecf1f9;letter-spacing:-0.83px;">Anomaly score</div>
<div class="a" style="left:885px;top:1478px;width:16px;height:16px;background:#dceef7;border-radius:50%;"></div>
<div class="a" style="left:889px;top:1478px;width:16px;height:16px;background:#a1d5ec;border-radius:50%;"></div>
<div class="a" style="left:893px;top:1478px;width:16px;height:16px;background:#fdd77c;border-radius:50%;"></div>
<div class="a" style="left:897px;top:1478px;width:16px;height:16px;background:#ff9a5a;border-radius:50%;"></div>
<div class="a" style="left:901px;top:1478px;width:16px;height:16px;background:#ef4d49;border-radius:50%;"></div>
<div class="t" style="left:933px;top:1472.5px;font-size:29px;color:#1d2a3e;-webkit-text-stroke:0.2px #1d2a3e;letter-spacing:0.39px;">Multiple</div>
<svg class="a" style="left:1128px;top:1480px;" width="20" height="12" viewBox="0 0 20 12"><path d="M1 1L10 10L19 1" fill="none" stroke="#0b1628" stroke-width="2.2"/></svg>
<div class="a" style="left:1217px;top:1455px;width:371px;height:62px;border:2px solid #cad3e2;border-radius:8px;background:#fff;"></div>
<div class="a" style="left:1219px;top:1457px;width:125px;height:58px;background:#ecf1f9;border-radius:6px 0 0 6px;"></div>
<div class="a" style="left:1523px;top:1457px;width:63px;height:58px;background:#ecf1f9;border-radius:0 6px 6px 0;"></div>
<div class="a" style="left:1522px;top:1457px;width:2px;height:58px;background:#cad3e2;"></div>
<div class="t" style="left:1237.6px;top:1474.8px;font-size:25px;color:#1d2a3e;font-weight:700;-webkit-text-stroke:0.35px #ecf1f9;letter-spacing:-0.49px;">Interval</div>
<div class="t" style="left:1360.5px;top:1472.5px;font-size:29px;color:#1d2a3e;-webkit-text-stroke:0.2px #1d2a3e;letter-spacing:0.21px;">Auto</div>
<svg class="a" style="left:1485px;top:1480px;" width="20" height="12" viewBox="0 0 20 12"><path d="M1 1L10 10L19 1" fill="none" stroke="#0b1628" stroke-width="2.2"/></svg>
<svg class="a" style="left:1540.0px;top:1472.0px;" width="28" height="28" viewBox="0 0 28 28"><circle cx="14.0" cy="14.0" r="13.16" fill="none" stroke="#516381" stroke-width="1.68"/><path d="M10.70 9.52 A3.64 3.64 0 1 1 14.00 13.44 V15.68" fill="none" stroke="#516381" stroke-width="2.10"/><circle cx="14.0" cy="20.08" r="1.90" fill="#516381"/></svg>
<div class="t" style="left:721.6px;top:1591.4px;font-size:25px;color:#0b1628;font-weight:700;-webkit-text-stroke:0.35px #fff;letter-spacing:-0.75px;">Time</div>
<svg class="a" style="left:791px;top:1589px;" width="22" height="31" viewBox="0 0 22 31"><path d="M1.5 10L11 1L20.5 10M11 1V30M1.5 21L11 30L20.5 21" fill="none" stroke="#516381" stroke-width="2"/></svg>
<div class="t" style="left:905px;top:1591.4px;font-size:25px;color:#0b1628;font-weight:700;-webkit-text-stroke:0.35px #fff;letter-spacing:-0.9px;">Score</div>
<div class="t" style="left:1057.7px;top:1591.4px;font-size:25px;color:#0b1628;font-weight:700;-webkit-text-stroke:0.35px #fff;letter-spacing:-0.22px;">Detector</div>
<svg class="a" style="left:1170.5px;top:1589px;" width="22" height="31" viewBox="0 0 22 31"><path d="M1.5 10L11 1L20.5 10M11 1V30M1.5 21L11 30L20.5 21" fill="none" stroke="#516381" stroke-width="2"/></svg>
<div class="t" style="left:1496px;top:1591.4px;font-size:25px;color:#0b1628;font-weight:700;-webkit-text-stroke:0.35px #fff;letter-spacing:-0.89px;">Found for</div>
<svg class="a" style="left:1619px;top:1589px;" width="22" height="31" viewBox="0 0 22 31"><path d="M1.5 10L11 1L20.5 10M11 1V30M1.5 21L11 30L20.5 21" fill="none" stroke="#516381" stroke-width="2"/></svg>
<div class="t" style="left:1696px;top:1591.4px;font-size:25px;color:#0b1628;font-weight:700;-webkit-text-stroke:0.35px #fff;letter-spacing:-0.47px;">Influenced by</div>
<svg class="a" style="left:1864px;top:1589px;" width="22" height="31" viewBox="0 0 22 31"><path d="M1.5 10L11 1L20.5 10M11 1V30M1.5 21L11 30L20.5 21" fill="none" stroke="#516381" stroke-width="2"/></svg>
<div class="t" style="left:2038px;top:1591.4px;font-size:25px;color:#0b1628;font-weight:700;-webkit-text-stroke:0.35px #fff;letter-spacing:-0.73px;">Actual</div>
<svg class="a" style="left:2153.7px;top:1589px;" width="22" height="31" viewBox="0 0 22 31"><path d="M1.5 10L11 1L20.5 10M11 1V30M1.5 21L11 30L20.5 21" fill="none" stroke="#516381" stroke-width="2"/></svg>
<div class="t" style="left:2198px;top:1591.4px;font-size:25px;color:#0b1628;font-weight:700;-webkit-text-stroke:0.35px #fff;letter-spacing:-0.61px;">Typical</div>
<svg class="a" style="left:2321.7px;top:1589px;" width="22" height="31" viewBox="0 0 22 31"><path d="M1.5 10L11 1L20.5 10M11 1V30M1.5 21L11 30L20.5 21" fill="none" stroke="#516381" stroke-width="2"/></svg>
<div class="t" style="left:2365.4px;top:1591.4px;font-size:25px;color:#0b1628;font-weight:700;-webkit-text-stroke:0.35px #fff;letter-spacing:-0.68px;">Description</div>
<svg class="a" style="left:2509.5px;top:1589px;" width="22" height="31" viewBox="0 0 22 31"><path d="M1.5 10L11 1L20.5 10M11 1V30M1.5 21L11 30L20.5 21" fill="none" stroke="#516381" stroke-width="2"/></svg>
<div class="t" style="left:2553px;top:1591.4px;font-size:25px;color:#0b1628;font-weight:700;-webkit-text-stroke:0.35px #fff;letter-spacing:-0.9px;">Job ID</div>
<svg class="a" style="left:2637px;top:1589px;" width="22" height="31" viewBox="0 0 22 31"><path d="M1.5 10L11 1L20.5 10M11 1V30M1.5 21L11 30L20.5 21" fill="none" stroke="#516381" stroke-width="2"/></svg>
<div class="t" style="left:2789.5px;top:1591.4px;font-size:25px;color:#0b1628;font-weight:700;-webkit-text-stroke:0.35px #fff;letter-spacing:-0.95px;">Actions</div>
<svg class="a" style="left:979.5px;top:1594.1px;" width="21" height="21" viewBox="0 0 21 21"><circle cx="10.5" cy="10.5" r="9.87" fill="none" stroke="#516381" stroke-width="1.26"/><path d="M8.02 7.14 A2.73 2.73 0 1 1 10.50 10.08 V11.76" fill="none" stroke="#516381" stroke-width="1.57"/><circle cx="10.5" cy="15.06" r="1.43" fill="#516381"/></svg>
<svg class="a" style="left:2118.5px;top:1594.1px;" width="21" height="21" viewBox="0 0 21 21"><circle cx="10.5" cy="10.5" r="9.87" fill="none" stroke="#516381" stroke-width="1.26"/><path d="M8.02 7.14 A2.73 2.73 0 1 1 10.50 10.08 V11.76" fill="none" stroke="#516381" stroke-width="1.57"/><circle cx="10.5" cy="15.06" r="1.43" fill="#516381"/></svg>
<svg class="a" style="left:2286.5px;top:1594.1px;" width="21" height="21" viewBox="0 0 21 21"><circle cx="10.5" cy="10.5" r="9.87" fill="none" stroke="#516381" stroke-width="1.26"/><path d="M8.02 7.14 A2.73 2.73 0 1 1 10.50 10.08 V11.76" fill="none" stroke="#516381" stroke-width="1.57"/><circle cx="10.5" cy="15.06" r="1.43" fill="#516381"/></svg>
<svg class="a" style="left:1015px;top:1590px;" width="22" height="30" viewBox="0 0 22 30"><path d="M11 0V28M1.5 18.5L11 28L20.5 18.5" fill="none" stroke="#0b1628" stroke-width="2.2"/></svg>
<div class="a" style="left:649px;top:1628px;width:2235px;height:2px;background:#e3e8f2;"></div>
<svg class="a" style="left:674px;top:1658.8px;" width="15" height="25" viewBox="0 0 15 25"><path d="M1.5 1L13.5 12.5L1.5 24" fill="none" stroke="#1750ba" stroke-width="2.2"/></svg>
<div class="t" style="left:721.6px;top:1642.4px;font-size:25.5px;color:#1d2a3e;-webkit-text-stroke:0.2px #1d2a3e;letter-spacing:0.55px;">July <span style="margin:0 -1.02px">1</span>9th</div>
<div class="t" style="left:721.6px;top:1674.0px;font-size:25.5px;color:#1d2a3e;-webkit-text-stroke:0.2px #1d2a3e;letter-spacing:0.81px;">2025</div>
<div class="a" style="left:913px;top:1663.3px;width:16px;height:16px;background:#ee4c48;border-radius:50%;"></div>
<div class="t" style="left:945.8px;top:1658.2px;font-size:25.5px;color:#1d2a3e;-webkit-text-stroke:0.2px #1d2a3e;letter-spacing:0.31px;">95</div>
<div class="t" style="left:1057.7px;top:1658.2px;font-size:25.5px;color:#1d2a3e;-webkit-text-stroke:0.2px #1d2a3e;letter-spacing:-0.03px;">Event rate by response code</div>
<div class="t" style="left:1497px;top:1658.2px;font-size:25.5px;color:#1d2a3e;-webkit-text-stroke:0.2px #1d2a3e;letter-spacing:0.71px;">200</div>
<div class="t" style="left:1696px;top:1641.9px;font-size:25.5px;color:#1d2a3e;-webkit-text-stroke:0.2px #1d2a3e;letter-spacing:0.16px;">response.keyword: 200</div>
<svg class="a" style="left:1967.5px;top:1645.0px;" width="20" height="20" viewBox="0 0 20 20"><g fill="none" stroke="#a2acbd" stroke-width="1.6"><circle cx="10.0" cy="10.0" r="9.2"/><path d="M10.0 4.5V15.5M4.5 10.0H15.5"/></g></svg>
<svg class="a" style="left:1702.0px;top:1677.1px;" width="20" height="20" viewBox="0 0 20 20"><g fill="none" stroke="#a2acbd" stroke-width="1.6"><circle cx="10.0" cy="10.0" r="9.2"/><path d="M4.5 10.0H15.5"/></g></svg>
<div class="t" style="left:2038px;top:1658.2px;font-size:25.5px;color:#1d2a3e;-webkit-text-stroke:0.2px #1d2a3e;">35</div>
<div class="t" style="left:2198px;top:1658.2px;font-size:25.5px;color:#1d2a3e;-webkit-text-stroke:0.2px #1d2a3e;letter-spacing:0.77px;">2<span style="margin:0 -1.02px">1</span>.3</div>
<svg class="a" style="left:2368px;top:1659.3px;" width="18" height="24" viewBox="0 0 18 24"><path d="M9 24V1.5M1 9.5L9 1.5L17 9.5" fill="none" stroke="#0b1628" stroke-width="2"/></svg>
<div class="t" style="left:2406px;top:1658.2px;font-size:25.5px;color:#1d2a3e;-webkit-text-stroke:0.2px #1d2a3e;letter-spacing:0.01px;">2x higher</div>
<div class="t" style="left:2553px;top:1641.9px;font-size:25.5px;color:#1d2a3e;-webkit-text-stroke:0.2px #1d2a3e;letter-spacing:-0.32px;">response_code_rat</div>
<div class="t" style="left:2553px;top:1673.5px;font-size:25.5px;color:#1d2a3e;-webkit-text-stroke:0.2px #1d2a3e;">es</div>
<svg class="a" style="left:2804.7px;top:1655.3px;" width="32" height="32" viewBox="0 0 32 32"><path d="M12.90 4.80L12.90 1.40L19.10 1.40L19.10 4.80Q20.30 8.55 24.15 7.72L27.09 6.02L30.19 11.38L27.25 13.08Q24.60 16.00 27.25 18.92L30.19 20.62L27.09 25.98L24.15 24.28Q20.30 23.45 19.10 27.20L19.10 30.60L12.90 30.60L12.90 27.20Q11.70 23.45 7.85 24.28L4.91 25.98L1.81 20.62L4.75 18.92Q7.40 16.00 4.75 13.08L1.81 11.38L4.91 6.02L7.85 7.72Q11.70 8.55 12.90 4.80Z" fill="none" stroke="#0b1628" stroke-width="1.9" stroke-linejoin="round"/><circle cx="16" cy="16" r="5.1" fill="none" stroke="#0b1628" stroke-width="1.9"/></svg>
<div class="a" style="left:649px;top:1712.6px;width:2235px;height:2px;background:#e3e8f2;"></div>
<svg class="a" style="left:674px;top:1743.3px;" width="15" height="25" viewBox="0 0 15 25"><path d="M1.5 1L13.5 12.5L1.5 24" fill="none" stroke="#1750ba" stroke-width="2.2"/></svg>
<div class="t" style="left:721.6px;top:1726.9px;font-size:25.5px;color:#1d2a3e;-webkit-text-stroke:0.2px #1d2a3e;letter-spacing:0.2px;">July 22nd</div>
<div class="t" style="left:721.6px;top:1758.5px;font-size:25.5px;color:#1d2a3e;-webkit-text-stroke:0.2px #1d2a3e;letter-spacing:0.81px;">2025</div>
<div class="a" style="left:913px;top:1747.8px;width:16px;height:16px;background:#a2d5ea;border-radius:50%;"></div>
<div class="t" style="left:945.8px;top:1742.7px;font-size:25.5px;color:#1d2a3e;-webkit-text-stroke:0.2px #1d2a3e;letter-spacing:0.31px;">24</div>
<div class="t" style="left:1057.7px;top:1726.9px;font-size:25.5px;color:#1d2a3e;-webkit-text-stroke:0.2px #1d2a3e;letter-spacing:0.04px;">High distinct count of URLs for a</div>
<div class="t" style="left:1057.7px;top:1758.5px;font-size:25.5px;color:#1d2a3e;-webkit-text-stroke:0.2px #1d2a3e;letter-spacing:-0.25px;">client IPs</div>
<div class="t" style="left:1497px;top:1742.7px;font-size:25.5px;color:#1d2a3e;-webkit-text-stroke:0.2px #1d2a3e;letter-spacing:0.92px;">4<span style="margin:0 -1.02px">1</span>.77.243.255</div>
<div class="t" style="left:1696px;top:1726.4px;font-size:25.5px;color:#1d2a3e;-webkit-text-stroke:0.2px #1d2a3e;letter-spacing:0.67px;">clientip: 4<span style="margin:0 -1.02px">1</span>.77.243.255</div>
<svg class="a" style="left:1970.5px;top:1729.5px;" width="20" height="20" viewBox="0 0 20 20"><g fill="none" stroke="#a2acbd" stroke-width="1.6"><circle cx="10.0" cy="10.0" r="9.2"/><path d="M10.0 4.5V15.5M4.5 10.0H15.5"/></g></svg>
<svg class="a" style="left:1702.0px;top:1761.6px;" width="20" height="20" viewBox="0 0 20 20"><g fill="none" stroke="#a2acbd" stroke-width="1.6"><circle cx="10.0" cy="10.0" r="9.2"/><path d="M4.5 10.0H15.5"/></g></svg>
<div class="t" style="left:2038px;top:1742.7px;font-size:25.5px;color:#1d2a3e;-webkit-text-stroke:0.2px #1d2a3e;">2</div>
<div class="t" style="left:2198px;top:1742.7px;font-size:25.5px;color:#1d2a3e;-webkit-text-stroke:0.2px #1d2a3e;letter-spacing:1.11px;"><span style="margin:0 -1.02px">1</span>.0<span style="margin:0 -1.02px">1</span></div>
<svg class="a" style="left:2368px;top:1743.8px;" width="18" height="24" viewBox="0 0 18 24"><path d="M9 24V1.5M1 9.5L9 1.5L17 9.5" fill="none" stroke="#0b1628" stroke-width="2"/></svg>
<div class="t" style="left:2406px;top:1742.7px;font-size:25.5px;color:#1d2a3e;-webkit-text-stroke:0.2px #1d2a3e;letter-spacing:0.01px;">2x higher</div>
<div class="t" style="left:2553px;top:1742.7px;font-size:25.5px;color:#1d2a3e;-webkit-text-stroke:0.2px #1d2a3e;letter-spacing:-0.39px;">url_scanning</div>
<svg class="a" style="left:2804.7px;top:1739.8px;" width="32" height="32" viewBox="0 0 32 32"><path d="M12.90 4.80L12.90 1.40L19.10 1.40L19.10 4.80Q20.30 8.55 24.15 7.72L27.09 6.02L30.19 11.38L27.25 13.08Q24.60 16.00 27.25 18.92L30.19 20.62L27.09 25.98L24.15 24.28Q20.30 23.45 19.10 27.20L19.10 30.60L12.90 30.60L12.90 27.20Q11.70 23.45 7.85 24.28L4.91 25.98L1.81 20.62L4.75 18.92Q7.40 16.00 4.75 13.08L1.81 11.38L4.91 6.02L7.85 7.72Q11.70 8.55 12.90 4.80Z" fill="none" stroke="#0b1628" stroke-width="1.9" stroke-linejoin="round"/><circle cx="16" cy="16" r="5.1" fill="none" stroke="#0b1628" stroke-width="1.9"/></svg>
<div class="a" style="left:649px;top:1797px;width:2235px;height:2px;background:#e3e8f2;"></div>
<svg class="a" style="left:674px;top:1828.2px;" width="15" height="25" viewBox="0 0 15 25"><path d="M1.5 1L13.5 12.5L1.5 24" fill="none" stroke="#1750ba" stroke-width="2.2"/></svg>
<div class="t" style="left:721.6px;top:1811.8px;font-size:25.5px;color:#1d2a3e;-webkit-text-stroke:0.2px #1d2a3e;letter-spacing:0.32px;">July 24th</div>
<div class="t" style="left:721.6px;top:1843.4px;font-size:25.5px;color:#1d2a3e;-webkit-text-stroke:0.2px #1d2a3e;letter-spacing:0.81px;">2025</div>
<div class="a" style="left:913px;top:1832.7px;width:16px;height:16px;background:#a2d5ea;border-radius:50%;"></div>
<div class="t" style="left:945.8px;top:1827.6px;font-size:25.5px;color:#1d2a3e;-webkit-text-stroke:0.2px #1d2a3e;letter-spacing:0.31px;">24</div>
<div class="t" style="left:1057.7px;top:1811.8px;font-size:25.5px;color:#1d2a3e;-webkit-text-stroke:0.2px #1d2a3e;letter-spacing:0.04px;">High distinct count of URLs for a</div>
<div class="t" style="left:1057.7px;top:1843.4px;font-size:25.5px;color:#1d2a3e;-webkit-text-stroke:0.2px #1d2a3e;letter-spacing:-0.25px;">client IPs</div>
<div class="t" style="left:1497px;top:1827.6px;font-size:25.5px;color:#1d2a3e;-webkit-text-stroke:0.2px #1d2a3e;letter-spacing:0.92px;">23.209.<span style="margin:0 -1.02px">1</span>90.88</div>
<div class="t" style="left:1696px;top:1811.3px;font-size:25.5px;color:#1d2a3e;-webkit-text-stroke:0.2px #1d2a3e;letter-spacing:0.67px;">clientip: 23.209.<span style="margin:0 -1.02px">1</span>90.88</div>
<svg class="a" style="left:1970.5px;top:1814.4px;" width="20" height="20" viewBox="0 0 20 20"><g fill="none" stroke="#a2acbd" stroke-width="1.6"><circle cx="10.0" cy="10.0" r="9.2"/><path d="M10.0 4.5V15.5M4.5 10.0H15.5"/></g></svg>
<svg class="a" style="left:1702.0px;top:1846.5px;" width="20" height="20" viewBox="0 0 20 20"><g fill="none" stroke="#a2acbd" stroke-width="1.6"><circle cx="10.0" cy="10.0" r="9.2"/><path d="M4.5 10.0H15.5"/></g></svg>
<div class="t" style="left:2038px;top:1827.6px;font-size:25.5px;color:#1d2a3e;-webkit-text-stroke:0.2px #1d2a3e;">2</div>
<div class="t" style="left:2198px;top:1827.6px;font-size:25.5px;color:#1d2a3e;-webkit-text-stroke:0.2px #1d2a3e;letter-spacing:1.11px;"><span style="margin:0 -1.02px">1</span>.0<span style="margin:0 -1.02px">1</span></div>
<svg class="a" style="left:2368px;top:1828.7px;" width="18" height="24" viewBox="0 0 18 24"><path d="M9 24V1.5M1 9.5L9 1.5L17 9.5" fill="none" stroke="#0b1628" stroke-width="2"/></svg>
<div class="t" style="left:2406px;top:1827.6px;font-size:25.5px;color:#1d2a3e;-webkit-text-stroke:0.2px #1d2a3e;letter-spacing:0.01px;">2x higher</div>
<div class="t" style="left:2553px;top:1827.6px;font-size:25.5px;color:#1d2a3e;-webkit-text-stroke:0.2px #1d2a3e;letter-spacing:-0.39px;">url_scanning</div>
<svg class="a" style="left:2804.7px;top:1824.7px;" width="32" height="32" viewBox="0 0 32 32"><path d="M12.90 4.80L12.90 1.40L19.10 1.40L19.10 4.80Q20.30 8.55 24.15 7.72L27.09 6.02L30.19 11.38L27.25 13.08Q24.60 16.00 27.25 18.92L30.19 20.62L27.09 25.98L24.15 24.28Q20.30 23.45 19.10 27.20L19.10 30.60L12.90 30.60L12.90 27.20Q11.70 23.45 7.85 24.28L4.91 25.98L1.81 20.62L4.75 18.92Q7.40 16.00 4.75 13.08L1.81 11.38L4.91 6.02L7.85 7.72Q11.70 8.55 12.90 4.80Z" fill="none" stroke="#0b1628" stroke-width="1.9" stroke-linejoin="round"/><circle cx="16" cy="16" r="5.1" fill="none" stroke="#0b1628" stroke-width="1.9"/></svg>
<div class="a" style="left:649px;top:1882.4px;width:2235px;height:2px;background:#e3e8f2;"></div>
<svg class="a" style="left:674px;top:1913.5500000000002px;" width="15" height="25" viewBox="0 0 15 25"><path d="M1.5 1L13.5 12.5L1.5 24" fill="none" stroke="#1750ba" stroke-width="2.2"/></svg>
<div class="t" style="left:721.6px;top:1897.2px;font-size:25.5px;color:#1d2a3e;-webkit-text-stroke:0.2px #1d2a3e;letter-spacing:0.17px;">July 23rd</div>
<div class="t" style="left:721.6px;top:1928.8px;font-size:25.5px;color:#1d2a3e;-webkit-text-stroke:0.2px #1d2a3e;letter-spacing:0.81px;">2025</div>
<div class="a" style="left:913px;top:1918.0500000000002px;width:16px;height:16px;background:#a2d5ea;border-radius:50%;"></div>
<div class="t" style="left:945.8px;top:1913.0px;font-size:25.5px;color:#1d2a3e;-webkit-text-stroke:0.2px #1d2a3e;letter-spacing:0.31px;">23</div>
<div class="t" style="left:1057.7px;top:1897.2px;font-size:25.5px;color:#1d2a3e;-webkit-text-stroke:0.2px #1d2a3e;letter-spacing:0.04px;">High distinct count of URLs for a</div>
<div class="t" style="left:1057.7px;top:1928.8px;font-size:25.5px;color:#1d2a3e;-webkit-text-stroke:0.2px #1d2a3e;letter-spacing:-0.25px;">client IPs</div>
<div class="t" style="left:1497px;top:1897.2px;font-size:25.5px;color:#1d2a3e;-webkit-text-stroke:0.2px #1d2a3e;letter-spacing:1.15px;">58.248.23<span style="margin:0 -1.02px">1</span>.<span style="margin:0 -1.02px">1</span>9</div>
<div class="t" style="left:1497px;top:1928.8px;font-size:25.5px;color:#1d2a3e;-webkit-text-stroke:0.2px #1d2a3e;">7</div>
<div class="t" style="left:1696px;top:1896.7px;font-size:25.5px;color:#1d2a3e;-webkit-text-stroke:0.2px #1d2a3e;letter-spacing:0.76px;">clientip: 58.248.23<span style="margin:0 -1.02px">1</span>.<span style="margin:0 -1.02px">1</span>97</div>
<svg class="a" style="left:1985.5px;top:1899.7500000000002px;" width="20" height="20" viewBox="0 0 20 20"><g fill="none" stroke="#a2acbd" stroke-width="1.6"><circle cx="10.0" cy="10.0" r="9.2"/><path d="M10.0 4.5V15.5M4.5 10.0H15.5"/></g></svg>
<svg class="a" style="left:1702.0px;top:1931.8500000000001px;" width="20" height="20" viewBox="0 0 20 20"><g fill="none" stroke="#a2acbd" stroke-width="1.6"><circle cx="10.0" cy="10.0" r="9.2"/><path d="M4.5 10.0H15.5"/></g></svg>
<div class="t" style="left:2038px;top:1913.0px;font-size:25.5px;color:#1d2a3e;-webkit-text-stroke:0.2px #1d2a3e;">2</div>
<div class="t" style="left:2198px;top:1913.0px;font-size:25.5px;color:#1d2a3e;-webkit-text-stroke:0.2px #1d2a3e;letter-spacing:1.11px;"><span style="margin:0 -1.02px">1</span>.0<span style="margin:0 -1.02px">1</span></div>
<svg class="a" style="left:2368px;top:1914.0500000000002px;" width="18" height="24" viewBox="0 0 18 24"><path d="M9 24V1.5M1 9.5L9 1.5L17 9.5" fill="none" stroke="#0b1628" stroke-width="2"/></svg>
<div class="t" style="left:2406px;top:1913.0px;font-size:25.5px;color:#1d2a3e;-webkit-text-stroke:0.2px #1d2a3e;letter-spacing:0.01px;">2x higher</div>
<div class="t" style="left:2553px;top:1913.0px;font-size:25.5px;color:#1d2a3e;-webkit-text-stroke:0.2px #1d2a3e;letter-spacing:-0.39px;">url_scanning</div>
<svg class="a" style="left:2804.7px;top:1910.0500000000002px;" width="32" height="32" viewBox="0 0 32 32"><path d="M12.90 4.80L12.90 1.40L19.10 1.40L19.10 4.80Q20.30 8.55 24.15 7.72L27.09 6.02L30.19 11.38L27.25 13.08Q24.60 16.00 27.25 18.92L30.19 20.62L27.09 25.98L24.15 24.28Q20.30 23.45 19.10 27.20L19.10 30.60L12.90 30.60L12.90 27.20Q11.70 23.45 7.85 24.28L4.91 25.98L1.81 20.62L4.75 18.92Q7.40 16.00 4.75 13.08L1.81 11.38L4.91 6.02L7.85 7.72Q11.70 8.55 12.90 4.80Z" fill="none" stroke="#0b1628" stroke-width="1.9" stroke-linejoin="round"/><circle cx="16" cy="16" r="5.1" fill="none" stroke="#0b1628" stroke-width="1.9"/></svg>
<div class="a" style="left:649px;top:1967.7px;width:2235px;height:2px;background:#e3e8f2;"></div>
<svg class="a" style="left:674px;top:1997.25px;" width="15" height="25" viewBox="0 0 15 25"><path d="M1.5 1L13.5 12.5L1.5 24" fill="none" stroke="#1750ba" stroke-width="2.2"/></svg>
<div class="t" style="left:721.6px;top:1980.9px;font-size:25.5px;color:#1d2a3e;-webkit-text-stroke:0.2px #1d2a3e;letter-spacing:0.6px;">July 2<span style="margin:0 -1.02px">1</span>st</div>
<div class="t" style="left:721.6px;top:2012.5px;font-size:25.5px;color:#1d2a3e;-webkit-text-stroke:0.2px #1d2a3e;letter-spacing:0.81px;">2025</div>
<div class="a" style="left:913px;top:2001.75px;width:16px;height:16px;background:#a2d5ea;border-radius:50%;"></div>
<div class="t" style="left:945.8px;top:1996.7px;font-size:25.5px;color:#1d2a3e;-webkit-text-stroke:0.2px #1d2a3e;letter-spacing:0.31px;">23</div>
<div class="t" style="left:1057.7px;top:1980.9px;font-size:25.5px;color:#1d2a3e;-webkit-text-stroke:0.2px #1d2a3e;letter-spacing:0.04px;">High distinct count of URLs for a</div>
<div class="t" style="left:1057.7px;top:2012.5px;font-size:25.5px;color:#1d2a3e;-webkit-text-stroke:0.2px #1d2a3e;letter-spacing:-0.25px;">client IPs</div>
<div class="t" style="left:1497px;top:1996.7px;font-size:25.5px;color:#1d2a3e;-webkit-text-stroke:0.2px #1d2a3e;letter-spacing:0.76px;">37.68.248.33</div>
<div class="t" style="left:1696px;top:1996.7px;font-size:25.5px;color:#1d2a3e;-webkit-text-stroke:0.2px #1d2a3e;letter-spacing:0.52px;">clientip: 37.68.248.33</div>
<svg class="a" style="left:1957.0px;top:1999.25px;" width="20" height="20" viewBox="0 0 20 20"><g fill="none" stroke="#a2acbd" stroke-width="1.6"><circle cx="10.0" cy="10.0" r="9.2"/><path d="M10.0 4.5V15.5M4.5 10.0H15.5"/></g></svg>
<svg class="a" style="left:1989.0px;top:1999.25px;" width="20" height="20" viewBox="0 0 20 20"><g fill="none" stroke="#a2acbd" stroke-width="1.6"><circle cx="10.0" cy="10.0" r="9.2"/><path d="M4.5 10.0H15.5"/></g></svg>
<div class="t" style="left:2038px;top:1996.7px;font-size:25.5px;color:#1d2a3e;-webkit-text-stroke:0.2px #1d2a3e;">2</div>
<div class="t" style="left:2198px;top:1996.7px;font-size:25.5px;color:#1d2a3e;-webkit-text-stroke:0.2px #1d2a3e;letter-spacing:1.11px;"><span style="margin:0 -1.02px">1</span>.0<span style="margin:0 -1.02px">1</span></div>
<svg class="a" style="left:2368px;top:1997.75px;" width="18" height="24" viewBox="0 0 18 24"><path d="M9 24V1.5M1 9.5L9 1.5L17 9.5" fill="none" stroke="#0b1628" stroke-width="2"/></svg>
<div class="t" style="left:2406px;top:1996.7px;font-size:25.5px;color:#1d2a3e;-webkit-text-stroke:0.2px #1d2a3e;letter-spacing:0.01px;">2x higher</div>
<div class="t" style="left:2553px;top:1996.7px;font-size:25.5px;color:#1d2a3e;-webkit-text-stroke:0.2px #1d2a3e;letter-spacing:-0.39px;">url_scanning</div>
<svg class="a" style="left:2804.7px;top:1993.75px;" width="32" height="32" viewBox="0 0 32 32"><path d="M12.90 4.80L12.90 1.40L19.10 1.40L19.10 4.80Q20.30 8.55 24.15 7.72L27.09 6.02L30.19 11.38L27.25 13.08Q24.60 16.00 27.25 18.92L30.19 20.62L27.09 25.98L24.15 24.28Q20.30 23.45 19.10 27.20L19.10 30.60L12.90 30.60L12.90 27.20Q11.70 23.45 7.85 24.28L4.91 25.98L1.81 20.62L4.75 18.92Q7.40 16.00 4.75 13.08L1.81 11.38L4.91 6.02L7.85 7.72Q11.70 8.55 12.90 4.80Z" fill="none" stroke="#0b1628" stroke-width="1.9" stroke-linejoin="round"/><circle cx="16" cy="16" r="5.1" fill="none" stroke="#0b1628" stroke-width="1.9"/></svg>
<div class="a" style="left:649px;top:2049.8px;width:2235px;height:2px;background:#e3e8f2;"></div>
<svg class="a" style="left:674px;top:2080.6000000000004px;" width="15" height="25" viewBox="0 0 15 25"><path d="M1.5 1L13.5 12.5L1.5 24" fill="none" stroke="#1750ba" stroke-width="2.2"/></svg>
<div class="t" style="left:721.6px;top:2064.2px;font-size:25.5px;color:#1d2a3e;-webkit-text-stroke:0.2px #1d2a3e;letter-spacing:0.2px;">July 22nd</div>
<div class="t" style="left:721.6px;top:2095.8px;font-size:25.5px;color:#1d2a3e;-webkit-text-stroke:0.2px #1d2a3e;letter-spacing:0.81px;">2025</div>
<div class="a" style="left:913px;top:2085.1000000000004px;width:16px;height:16px;background:#a2d5ea;border-radius:50%;"></div>
<div class="t" style="left:945.8px;top:2080.0px;font-size:25.5px;color:#1d2a3e;-webkit-text-stroke:0.2px #1d2a3e;letter-spacing:0.31px;">23</div>
<div class="t" style="left:1057.7px;top:2064.2px;font-size:25.5px;color:#1d2a3e;-webkit-text-stroke:0.2px #1d2a3e;letter-spacing:0.04px;">High distinct count of URLs for a</div>
<div class="t" style="left:1057.7px;top:2095.8px;font-size:25.5px;color:#1d2a3e;-webkit-text-stroke:0.2px #1d2a3e;letter-spacing:-0.25px;">client IPs</div>
<div class="t" style="left:1497px;top:2080.0px;font-size:25.5px;color:#1d2a3e;-webkit-text-stroke:0.2px #1d2a3e;letter-spacing:1.07px;">32.<span style="margin:0 -1.02px">1</span>20.62.<span style="margin:0 -1.02px">1</span>76</div>
<div class="t" style="left:1696px;top:2063.7px;font-size:25.5px;color:#1d2a3e;-webkit-text-stroke:0.2px #1d2a3e;letter-spacing:0.76px;">clientip: 32.<span style="margin:0 -1.02px">1</span>20.62.<span style="margin:0 -1.02px">1</span>76</div>
<svg class="a" style="left:1970.5px;top:2066.8px;" width="20" height="20" viewBox="0 0 20 20"><g fill="none" stroke="#a2acbd" stroke-width="1.6"><circle cx="10.0" cy="10.0" r="9.2"/><path d="M10.0 4.5V15.5M4.5 10.0H15.5"/></g></svg>
<svg class="a" style="left:1702.0px;top:2098.9000000000005px;" width="20" height="20" viewBox="0 0 20 20"><g fill="none" stroke="#a2acbd" stroke-width="1.6"><circle cx="10.0" cy="10.0" r="9.2"/><path d="M4.5 10.0H15.5"/></g></svg>
<div class="t" style="left:2038px;top:2080.0px;font-size:25.5px;color:#1d2a3e;-webkit-text-stroke:0.2px #1d2a3e;">2</div>
<div class="t" style="left:2198px;top:2080.0px;font-size:25.5px;color:#1d2a3e;-webkit-text-stroke:0.2px #1d2a3e;letter-spacing:1.11px;"><span style="margin:0 -1.02px">1</span>.0<span style="margin:0 -1.02px">1</span></div>
<svg class="a" style="left:2368px;top:2081.1000000000004px;" width="18" height="24" viewBox="0 0 18 24"><path d="M9 24V1.5M1 9.5L9 1.5L17 9.5" fill="none" stroke="#0b1628" stroke-width="2"/></svg>
<div class="t" style="left:2406px;top:2080.0px;font-size:25.5px;color:#1d2a3e;-webkit-text-stroke:0.2px #1d2a3e;letter-spacing:0.01px;">2x higher</div>
<div class="t" style="left:2553px;top:2080.0px;font-size:25.5px;color:#1d2a3e;-webkit-text-stroke:0.2px #1d2a3e;letter-spacing:-0.39px;">url_scanning</div>
<svg class="a" style="left:2804.7px;top:2077.1000000000004px;" width="32" height="32" viewBox="0 0 32 32"><path d="M12.90 4.80L12.90 1.40L19.10 1.40L19.10 4.80Q20.30 8.55 24.15 7.72L27.09 6.02L30.19 11.38L27.25 13.08Q24.60 16.00 27.25 18.92L30.19 20.62L27.09 25.98L24.15 24.28Q20.30 23.45 19.10 27.20L19.10 30.60L12.90 30.60L12.90 27.20Q11.70 23.45 7.85 24.28L4.91 25.98L1.81 20.62L4.75 18.92Q7.40 16.00 4.75 13.08L1.81 11.38L4.91 6.02L7.85 7.72Q11.70 8.55 12.90 4.80Z" fill="none" stroke="#0b1628" stroke-width="1.9" stroke-linejoin="round"/><circle cx="16" cy="16" r="5.1" fill="none" stroke="#0b1628" stroke-width="1.9"/></svg>
<div class="a" style="left:649px;top:2134.4px;width:2235px;height:2px;background:#e3e8f2;"></div>
<svg class="a" style="left:674px;top:2164.95px;" width="15" height="25" viewBox="0 0 15 25"><path d="M1.5 1L13.5 12.5L1.5 24" fill="none" stroke="#1750ba" stroke-width="2.2"/></svg>
<div class="t" style="left:721.6px;top:2148.6px;font-size:25.5px;color:#1d2a3e;-webkit-text-stroke:0.2px #1d2a3e;letter-spacing:0.2px;">July 22nd</div>
<div class="t" style="left:721.6px;top:2180.2px;font-size:25.5px;color:#1d2a3e;-webkit-text-stroke:0.2px #1d2a3e;letter-spacing:0.81px;">2025</div>
<div class="a" style="left:913px;top:2169.45px;width:16px;height:16px;background:#a2d5ea;border-radius:50%;"></div>
<div class="t" style="left:945.8px;top:2164.4px;font-size:25.5px;color:#1d2a3e;-webkit-text-stroke:0.2px #1d2a3e;letter-spacing:0.31px;">23</div>
<div class="t" style="left:1057.7px;top:2148.6px;font-size:25.5px;color:#1d2a3e;-webkit-text-stroke:0.2px #1d2a3e;letter-spacing:0.04px;">High distinct count of URLs for a</div>
<div class="t" style="left:1057.7px;top:2180.2px;font-size:25.5px;color:#1d2a3e;-webkit-text-stroke:0.2px #1d2a3e;letter-spacing:-0.25px;">client IPs</div>
<div class="t" style="left:1497px;top:2164.4px;font-size:25.5px;color:#1d2a3e;-webkit-text-stroke:0.2px #1d2a3e;letter-spacing:1.07px;"><span style="margin:0 -1.02px">1</span>58.4<span style="margin:0 -1.02px">1</span>.235.38</div>
<div class="t" style="left:1696px;top:2148.1px;font-size:25.5px;color:#1d2a3e;-webkit-text-stroke:0.2px #1d2a3e;letter-spacing:0.76px;">clientip: <span style="margin:0 -1.02px">1</span>58.4<span style="margin:0 -1.02px">1</span>.235.38</div>
<svg class="a" style="left:1970.5px;top:2151.1499999999996px;" width="20" height="20" viewBox="0 0 20 20"><g fill="none" stroke="#a2acbd" stroke-width="1.6"><circle cx="10.0" cy="10.0" r="9.2"/><path d="M10.0 4.5V15.5M4.5 10.0H15.5"/></g></svg>
<svg class="a" style="left:1702.0px;top:2183.25px;" width="20" height="20" viewBox="0 0 20 20"><g fill="none" stroke="#a2acbd" stroke-width="1.6"><circle cx="10.0" cy="10.0" r="9.2"/><path d="M4.5 10.0H15.5"/></g></svg>
<div class="t" style="left:2038px;top:2164.4px;font-size:25.5px;color:#1d2a3e;-webkit-text-stroke:0.2px #1d2a3e;">2</div>
<div class="t" style="left:2198px;top:2164.4px;font-size:25.5px;color:#1d2a3e;-webkit-text-stroke:0.2px #1d2a3e;letter-spacing:1.11px;"><span style="margin:0 -1.02px">1</span>.0<span style="margin:0 -1.02px">1</span></div>
<svg class="a" style="left:2368px;top:2165.45px;" width="18" height="24" viewBox="0 0 18 24"><path d="M9 24V1.5M1 9.5L9 1.5L17 9.5" fill="none" stroke="#0b1628" stroke-width="2"/></svg>
<div class="t" style="left:2406px;top:2164.4px;font-size:25.5px;color:#1d2a3e;-webkit-text-stroke:0.2px #1d2a3e;letter-spacing:0.01px;">2x higher</div>
<div class="t" style="left:2553px;top:2164.4px;font-size:25.5px;color:#1d2a3e;-webkit-text-stroke:0.2px #1d2a3e;letter-spacing:-0.39px;">url_scanning</div>
<svg class="a" style="left:2804.7px;top:2161.45px;" width="32" height="32" viewBox="0 0 32 32"><path d="M12.90 4.80L12.90 1.40L19.10 1.40L19.10 4.80Q20.30 8.55 24.15 7.72L27.09 6.02L30.19 11.38L27.25 13.08Q24.60 16.00 27.25 18.92L30.19 20.62L27.09 25.98L24.15 24.28Q20.30 23.45 19.10 27.20L19.10 30.60L12.90 30.60L12.90 27.20Q11.70 23.45 7.85 24.28L4.91 25.98L1.81 20.62L4.75 18.92Q7.40 16.00 4.75 13.08L1.81 11.38L4.91 6.02L7.85 7.72Q11.70 8.55 12.90 4.80Z" fill="none" stroke="#0b1628" stroke-width="1.9" stroke-linejoin="round"/><circle cx="16" cy="16" r="5.1" fill="none" stroke="#0b1628" stroke-width="1.9"/></svg>
<div class="a" style="left:649px;top:2218.5px;width:2235px;height:2px;background:#e3e8f2;"></div>
<svg class="a" style="left:674px;top:2249.25px;" width="15" height="25" viewBox="0 0 15 25"><path d="M1.5 1L13.5 12.5L1.5 24" fill="none" stroke="#1750ba" stroke-width="2.2"/></svg>
<div class="t" style="left:721.6px;top:2232.9px;font-size:25.5px;color:#1d2a3e;-webkit-text-stroke:0.2px #1d2a3e;letter-spacing:0.55px;">July <span style="margin:0 -1.02px">1</span>8th</div>
<div class="t" style="left:721.6px;top:2264.5px;font-size:25.5px;color:#1d2a3e;-webkit-text-stroke:0.2px #1d2a3e;letter-spacing:0.81px;">2025</div>
<div class="a" style="left:913px;top:2253.75px;width:16px;height:16px;background:#a2d5ea;border-radius:50%;"></div>
<div class="t" style="left:945.8px;top:2248.7px;font-size:25.5px;color:#1d2a3e;-webkit-text-stroke:0.2px #1d2a3e;letter-spacing:1.33px;">2<span style="margin:0 -1.02px">1</span></div>
<div class="t" style="left:1057.7px;top:2232.9px;font-size:25.5px;color:#1d2a3e;-webkit-text-stroke:0.2px #1d2a3e;letter-spacing:0.04px;">High distinct count of URLs for a</div>
<div class="t" style="left:1057.7px;top:2264.5px;font-size:25.5px;color:#1d2a3e;-webkit-text-stroke:0.2px #1d2a3e;letter-spacing:-0.25px;">client IPs</div>
<div class="t" style="left:1497px;top:2248.7px;font-size:25.5px;color:#1d2a3e;-webkit-text-stroke:0.2px #1d2a3e;letter-spacing:1.07px;">85.2<span style="margin:0 -1.02px">1</span>0.<span style="margin:0 -1.02px">1</span>68.78</div>
<div class="t" style="left:1696px;top:2232.4px;font-size:25.5px;color:#1d2a3e;-webkit-text-stroke:0.2px #1d2a3e;letter-spacing:0.76px;">clientip: 85.2<span style="margin:0 -1.02px">1</span>0.<span style="margin:0 -1.02px">1</span>68.78</div>
<svg class="a" style="left:1970.5px;top:2235.45px;" width="20" height="20" viewBox="0 0 20 20"><g fill="none" stroke="#a2acbd" stroke-width="1.6"><circle cx="10.0" cy="10.0" r="9.2"/><path d="M10.0 4.5V15.5M4.5 10.0H15.5"/></g></svg>
<svg class="a" style="left:1702.0px;top:2267.55px;" width="20" height="20" viewBox="0 0 20 20"><g fill="none" stroke="#a2acbd" stroke-width="1.6"><circle cx="10.0" cy="10.0" r="9.2"/><path d="M4.5 10.0H15.5"/></g></svg>
<div class="t" style="left:2038px;top:2248.7px;font-size:25.5px;color:#1d2a3e;-webkit-text-stroke:0.2px #1d2a3e;">2</div>
<div class="t" style="left:2198px;top:2248.7px;font-size:25.5px;color:#1d2a3e;-webkit-text-stroke:0.2px #1d2a3e;letter-spacing:0.6px;"><span style="margin:0 -1.02px">1</span>.02</div>
<svg class="a" style="left:2368px;top:2249.75px;" width="18" height="24" viewBox="0 0 18 24"><path d="M9 24V1.5M1 9.5L9 1.5L17 9.5" fill="none" stroke="#0b1628" stroke-width="2"/></svg>
<div class="t" style="left:2406px;top:2248.7px;font-size:25.5px;color:#1d2a3e;-webkit-text-stroke:0.2px #1d2a3e;letter-spacing:0.01px;">2x higher</div>
<div class="t" style="left:2553px;top:2248.7px;font-size:25.5px;color:#1d2a3e;-webkit-text-stroke:0.2px #1d2a3e;letter-spacing:-0.39px;">url_scanning</div>
<svg class="a" style="left:2804.7px;top:2245.75px;" width="32" height="32" viewBox="0 0 32 32"><path d="M12.90 4.80L12.90 1.40L19.10 1.40L19.10 4.80Q20.30 8.55 24.15 7.72L27.09 6.02L30.19 11.38L27.25 13.08Q24.60 16.00 27.25 18.92L30.19 20.62L27.09 25.98L24.15 24.28Q20.30 23.45 19.10 27.20L19.10 30.60L12.90 30.60L12.90 27.20Q11.70 23.45 7.85 24.28L4.91 25.98L1.81 20.62L4.75 18.92Q7.40 16.00 4.75 13.08L1.81 11.38L4.91 6.02L7.85 7.72Q11.70 8.55 12.90 4.80Z" fill="none" stroke="#0b1628" stroke-width="1.9" stroke-linejoin="round"/><circle cx="16" cy="16" r="5.1" fill="none" stroke="#0b1628" stroke-width="1.9"/></svg>
<div class="a" style="left:649px;top:2303px;width:2235px;height:2px;background:#e3e8f2;"></div>
</body></html>
